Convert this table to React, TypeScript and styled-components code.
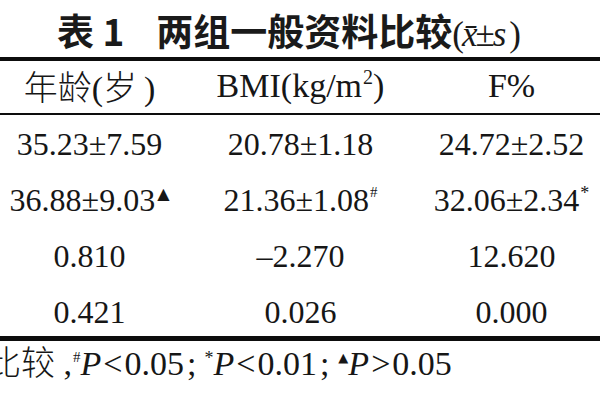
import React from 'react';
import styled, { createGlobalStyle } from 'styled-components';

const GlobalStyle = createGlobalStyle`
  html, body {
    margin: 0;
    padding: 0;
    background: #ffffff;
  }
  body {
    width: 600px;
    height: 400px;
    overflow: hidden;
  }
`;

const Page = styled.div`
  width: 600px;
  height: 400px;
  overflow: hidden;
  background: #ffffff;
  color: #161616;
  font-family: "Liberation Serif", "Times New Roman", Tinos, serif;
  display: flex;
  flex-direction: column;
`;

const Title = styled.h1`
  margin: 0;
  height: 57px;
  box-sizing: border-box;
  padding: 12px 0 0 57px;
  font-family: "Noto Sans CJK SC", sans-serif;
  font-weight: 700;
  font-size: 37px;
  line-height: 37px;
  color: #1a1a1a;
  white-space: nowrap;
`;

const TableNo = styled.span`
  margin-right: 32px;
`;

const Formula = styled.span`
  font-family: "Liberation Serif", "Times New Roman", serif;
  font-weight: 400;
  font-size: 35px;
  letter-spacing: -2px;
`;

const Ital = styled.i`
  font-style: italic;
`;

const Rule = styled.div<{ $h: number }>`
  height: ${(p) => p.$h}px;
  background: #0d0d0d;
  flex: none;
`;

const Row = styled.div<{ $head?: boolean }>`
  display: grid;
  grid-template-columns: repeat(3, 211px);
  margin-left: -16px;
  height: ${(p) => (p.$head ? '52px' : 'auto')};
  box-sizing: border-box;
  padding-top: ${(p) => (p.$head ? '8px' : '0')};
  font-size: ${(p) => (p.$head ? '34px' : '32px')};
  line-height: ${(p) => (p.$head ? '34px' : '32px')};
`;

const Body = styled.div`
  display: flex;
  flex-direction: column;
  gap: 24px;
  padding: 13px 0 8px;
`;

const Cell = styled.div`
  display: flex;
  justify-content: center;
  white-space: nowrap;
`;

const CellText = styled.span`
  white-space: nowrap;
`;

const Sup = styled.span<{ $size: number; $rise: number }>`
  font-size: ${(p) => p.$size}px;
  line-height: 0;
  vertical-align: ${(p) => p.$rise}px;
  margin-left: 1px;
`;

const Tri = styled.span<{ $size: number; $rise: number }>`
  font-family: "DejaVu Sans", sans-serif;
  font-size: ${(p) => p.$size}px;
  line-height: 0;
  vertical-align: ${(p) => p.$rise}px;
  margin-left: 2px;
`;

const Footer = styled.div`
  margin-left: -13px;
  padding-top: 4px;
  font-size: 34px;
  line-height: 32px;
  white-space: nowrap;
`;

const Op = styled.span`
  margin: 0 2px;
`;

const Semi = styled.span`
  margin: 0 7px 0 3px;
`;

const Cjk = styled.span<{ $size?: number }>`
  font-family: "Noto Sans CJK SC", sans-serif;
  font-weight: 300;
  font-size: ${(p) => p.$size ?? 33}px;
`;

type Mark = 'tri' | 'hash' | 'star' | undefined;

const rows: { v: string; m?: Mark }[][] = [
  [{ v: '35.23±7.59' }, { v: '20.78±1.18' }, { v: '24.72±2.52' }],
  [
    { v: '36.88±9.03', m: 'tri' },
    { v: '21.36±1.08', m: 'hash' },
    { v: '32.06±2.34', m: 'star' },
  ],
  [{ v: '0.810' }, { v: '–2.270' }, { v: '12.620' }],
  [{ v: '0.421' }, { v: '0.026' }, { v: '0.000' }],
];

const Marker: React.FC<{ m: Mark }> = ({ m }) => {
  if (m === 'tri') return <Tri $size={16} $rise={12}>▲</Tri>;
  if (m === 'hash') return <Sup $size={15} $rise={14}>#</Sup>;
  if (m === 'star') return <Sup $size={18} $rise={12}>*</Sup>;
  return null;
};

export default function App() {
  return (
    <Page>
      <GlobalStyle />
      <Title>
        <TableNo>表 1</TableNo>
        两组一般资料比较
        <Formula>
          (<Ital>x̄</Ital>±<Ital>s</Ital>&thinsp;)
        </Formula>
      </Title>
      <Rule $h={4} />
      <Row $head>
        <Cell>
          <CellText>
            <Cjk $size={34}>年龄</Cjk>(<Cjk $size={34}>岁</Cjk>&thinsp;)
          </CellText>
        </Cell>
        <Cell>
          <CellText>
            BMI(kg/m<Sup $size={20} $rise={13}>2</Sup>)
          </CellText>
        </Cell>
        <Cell>
          <CellText>F%</CellText>
        </Cell>
      </Row>
      <Rule $h={2} />
      <Body>
        {rows.map((r, i) => (
          <Row key={i}>
            {r.map((c, j) => (
              <Cell key={j}>
                <CellText>
                  {c.v}
                  <Marker m={c.m} />
                </CellText>
              </Cell>
            ))}
          </Row>
        ))}
      </Body>
      <Rule $h={5} />
      <Footer>
        <Cjk $size={34}>比较</Cjk> ,<Sup $size={15} $rise={13}>#</Sup>
        <Ital>P</Ital>
        <Op>&lt;</Op>0.05<Semi>;</Semi>
        <Sup $size={18} $rise={11}>*</Sup>
        <Ital>P</Ital>
        <Op>&lt;</Op>0.01<Semi>;</Semi>
        <Tri $size={13} $rise={13}>▲</Tri>
        <Ital>P</Ital>
        <Op>&gt;</Op>0.05
      </Footer>
    </Page>
  );
}
